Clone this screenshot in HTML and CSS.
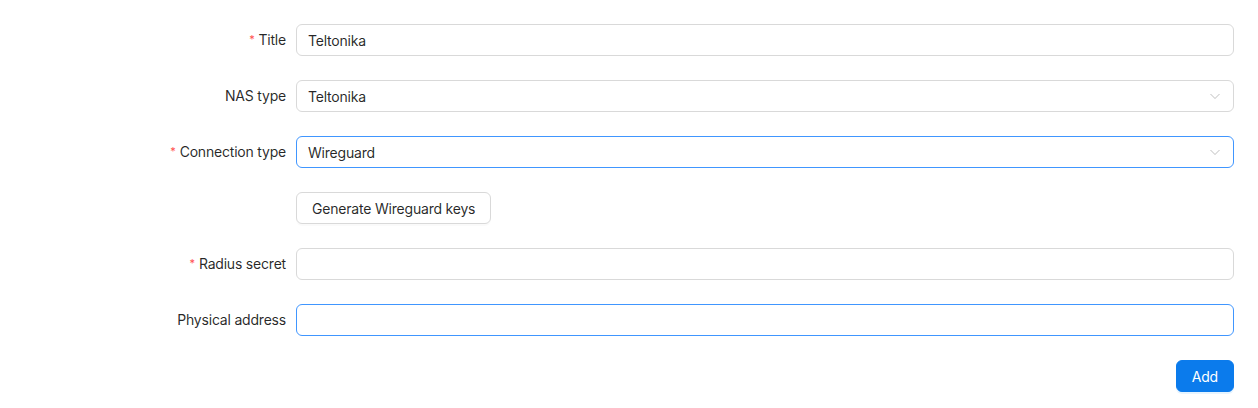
FILE: index.html
```html
<!DOCTYPE html>
<html lang="en">
<head>
<meta charset="utf-8">
<title>NAS form</title>
<link rel="stylesheet" href="styles.css">
</head>
<body>
<form class="form">
  <div class="row">
    <label class="label"><span class="req">*</span>Title</label>
    <div class="control"><input class="input" type="text" value="Teltonika"></div>
  </div>
  <div class="row">
    <label class="label">NAS type</label>
    <div class="control">
      <div class="select">
        <span class="select-value">Teltonika</span>
        <svg class="arrow" viewBox="0 0 12 12" width="12" height="12"><path d="M1.5 4 L6 8.5 L10.5 4" fill="none" stroke="currentColor" stroke-width="1" /></svg>
      </div>
    </div>
  </div>
  <div class="row">
    <label class="label"><span class="req">*</span>Connection type</label>
    <div class="control">
      <div class="select focused">
        <span class="select-value">Wireguard</span>
        <svg class="arrow" viewBox="0 0 12 12" width="12" height="12"><path d="M1.5 4 L6 8.5 L10.5 4" fill="none" stroke="currentColor" stroke-width="1" /></svg>
      </div>
    </div>
  </div>
  <div class="row">
    <div class="label"></div>
    <div class="control"><button type="button" class="btn">Generate Wireguard keys</button></div>
  </div>
  <div class="row">
    <label class="label"><span class="req">*</span>Radius secret</label>
    <div class="control"><input class="input" type="text" value=""></div>
  </div>
  <div class="row">
    <label class="label">Physical address</label>
    <div class="control"><input class="input focused" type="text" value=""></div>
  </div>
  <div class="actions">
    <button type="button" class="btn primary">Add</button>
  </div>
</form>
</body>
</html>
```
FILE: styles.css
```css
* { box-sizing: border-box; }
html, body { margin: 0; padding: 0; background: #fff; }
body {
  font-family: Inter, "Noto Sans", sans-serif;
  font-size: 14px;
  letter-spacing: -0.2px;
  color: rgba(0,0,0,0.85);
  width: 1258px;
  height: 408px;
  overflow: hidden;
}
.form {
  padding: 24px 24px 0 24px;
  display: flex;
  flex-direction: column;
  gap: 24px;
}
.row {
  display: flex;
  align-items: center;
  height: 32px;
}
.label {
  width: 262px;
  flex: none;
  text-align: right;
  margin-right: 10px;
  line-height: 32px;
  white-space: nowrap;
}
.req {
  color: #ff4d4f;
  font-size: 11px;
  margin-right: 4px;
  position: relative;
  top: -2px;
}
.control { flex: 1; }
.input, .select {
  width: 100%;
  height: 32px;
  border: 1px solid #d9d9d9;
  border-radius: 6px;
  padding: 4px 11px;
  font: inherit;
  letter-spacing: inherit;
  color: rgba(0,0,0,0.85);
  background: #fff;
  outline: none;
}
.input.focused, .select.focused { border-color: #4096ff; }
.select {
  display: flex;
  align-items: center;
  justify-content: space-between;
}
.arrow { color: rgba(0,0,0,0.25); margin-right: 1px; }
.btn {
  height: 32px;
  padding: 4px 15px;
  border: 1px solid #d9d9d9;
  border-radius: 6px;
  background: #fff;
  font: inherit;
  letter-spacing: inherit;
  color: rgba(0,0,0,0.85);
  box-shadow: 0 2px 0 rgba(0,0,0,0.02);
}
.btn.primary {
  background: #0b7bec;
  border-color: #0b7bec;
  color: #fff;
  box-shadow: 0 2px 0 rgba(5,145,255,0.1);
}
.actions {
  display: flex;
  justify-content: flex-end;
}
```
